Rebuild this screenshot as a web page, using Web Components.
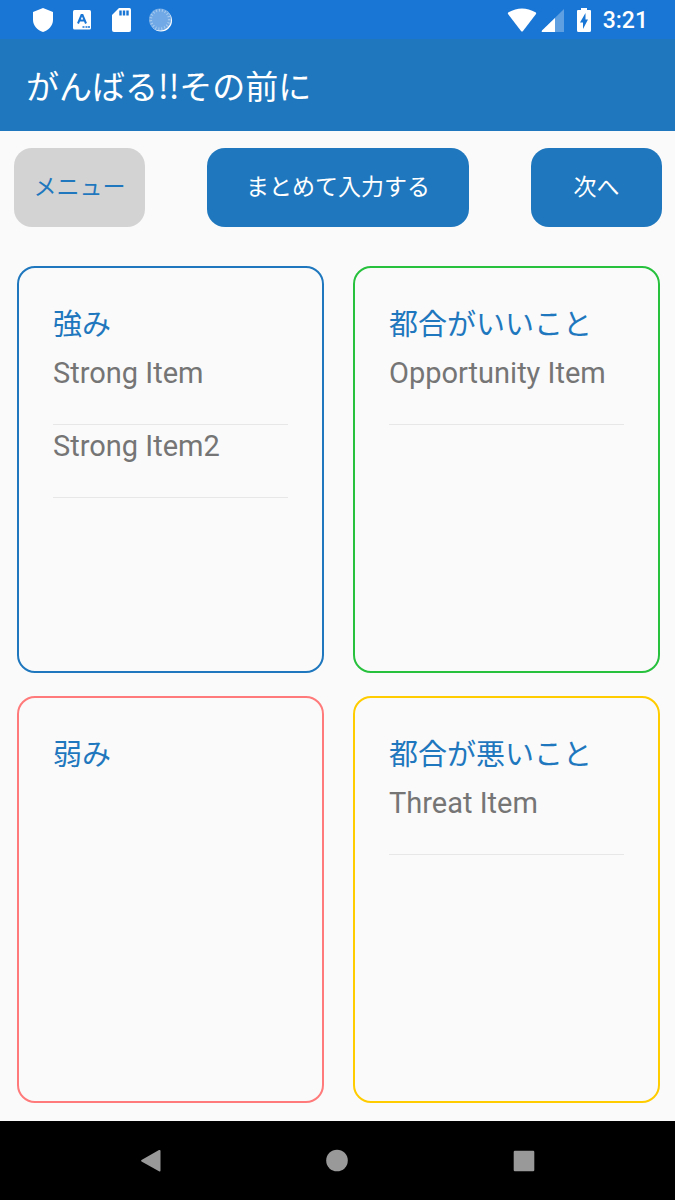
<!DOCTYPE html>
<html lang="ja">
<head>
    <meta charset="utf-8">
    <meta name="viewport" content="width=device-width, initial-scale=1">
    <title>がんばる!!その前に</title>
    <style>
        body {
            margin: 0;
            background-color: #fafafa;
            font-family: Roboto, "Noto Sans CJK JP", sans-serif;
        }
    </style>
</head>
<body>
    <swot-app></swot-app>

    <script>
        class StatusBar extends HTMLElement {
            constructor() {
                super();
                this.attachShadow({ mode: 'open' });
                this.shadowRoot.innerHTML = `
                    <style>
                        :host {
                            display: flex;
                            align-items: center;
                            justify-content: space-between;
                            height: 39px;
                            padding: 0 27px 0 31px;
                            background-color: #1976d5;
                            color: white;
                            font-size: 23px;
                            font-weight: 500;
                        }
                        div {
                            display: flex;
                            align-items: center;
                        }
                        .notifications { gap: 15px; }
                        .system { gap: 4px; }
                        svg { display: block; }
                        time {
                            margin-left: 4px;
                            padding-top: 2px;
                            line-height: 36px;
                        }
                    </style>
                    <div class="notifications">
                        <svg width="24" height="24" viewBox="0 0 24 24" fill="white" aria-hidden="true">
                            <path d="M12 0 L22 4 V12 C22 17.500 17.500 22.500 12 24 C6.500 22.500 2 17.500 2 12 V4 Z"/>
                        </svg>
                        <svg width="24" height="24" viewBox="0 0 24 24" aria-hidden="true">
                            <rect x="3" y="2" width="18" height="19.500" rx="1.500" fill="white"/>
                            <path d="M8 15.500 L11.500 7 L12.500 7 L16 15.500 M9.500 12.500 H14.500" fill="none" stroke="#1976d5" stroke-width="2"/>
                            <path d="M12.500 19 h2 M15.500 19 h2 M18 19 h2" stroke="#1976d5" stroke-width="1.500"/>
                        </svg>
                        <svg width="24" height="24" viewBox="0 0 24 24" aria-hidden="true">
                            <path d="M10 0 H20.500 Q22 0 22 1.500 V22 Q22 24 20 24 H5 Q3 24 3 22 V7 Z" fill="white"/>
                            <path d="M11.500 2.500 V7.500 M15 2.500 V7.500 M18.500 2.500 V7.500" stroke="#1976d5" stroke-width="2.400"/>
                        </svg>
                        <svg width="24" height="24" viewBox="0 0 24 24" aria-hidden="true">
                            <circle cx="13" cy="12.500" r="11" fill="white"/>
                            <circle cx="12" cy="11.500" r="11" fill="#70a9e5"/>
                            <circle cx="12" cy="11.500" r="9.200" fill="none" stroke="#a9cbef" stroke-width="2.600" stroke-dasharray="1 2"/>
                        </svg>
                    </div>
                    <div class="system">
                        <svg width="30" height="24" viewBox="0 0 30 24" fill="white" aria-hidden="true">
                            <path d="M1 6 Q0.500 5 1.500 4.300 Q15 -3.500 28.500 4.300 Q29.500 5 29 6 L16 23 Q15 24 14 23 Z"/>
                        </svg>
                        <svg width="24" height="24" viewBox="0 0 24 24" fill="white" aria-hidden="true">
                            <path d="M23 1 V24 H2 Q0 24 1 22.500 Z" opacity="0.3"/>
                            <path d="M14 10 V24 H2 Q0 24 1 22.500 Z"/>
                        </svg>
                        <svg width="26" height="24" viewBox="2 0 26 24" aria-hidden="true">
                            <path d="M14 0 H20 V2 H23 Q24 2 24 3 V22.500 Q24 24 22.500 24 H11.500 Q10 24 10 22.500 V3 Q10 2 11 2 H14 Z" fill="white"/>
                            <path d="M18.500 5 L13 14.500 H16 V21 L21 11.500 H18.500 Z" fill="#1976d5"/>
                        </svg>
                        <time>3:21</time>
                    </div>
                `;
            }
        }

        class AppHeader extends HTMLElement {
            constructor() {
                super();
                this.attachShadow({ mode: 'open' });
                this.shadowRoot.innerHTML = `
                    <style>
                        :host {
                            display: block;
                            padding: 21px 26px;
                            background-color: #1f78be;
                            color: white;
                        }
                        h1 {
                            margin: 0;
                            font-family: "Noto Sans CJK JP", sans-serif;
                            font-size: 33px;
                            font-weight: 400;
                            line-height: 50px;
                        }
                    </style>
                    <h1><slot></slot></h1>
                `;
            }
        }

        class ActionButton extends HTMLElement {
            constructor() {
                super();
                this.attachShadow({ mode: 'open' });
                this.shadowRoot.innerHTML = `
                    <style>
                        :host { display: block; }
                        button {
                            display: block;
                            width: 100%;
                            height: 79px;
                            padding: 0;
                            border: 0;
                            border-radius: 18px;
                            background-color: #1f78be;
                            color: white;
                            font: inherit;
                            font-size: 23px;
                            line-height: 32px;
                            white-space: nowrap;
                            cursor: pointer;
                        }
                        :host([secondary]) button {
                            background-color: #d3d3d3;
                            color: #1f78be;
                        }
                    </style>
                    <button type="button"><slot></slot></button>
                `;
            }
        }

        // color = border color of the card
        class SwotCard extends HTMLElement {
            constructor() {
                super();
                this.attachShadow({ mode: 'open' });
                this.shadowRoot.innerHTML = `
                    <style>
                        :host {
                            display: block;
                            padding: 34px;
                            border: 2px solid #1f78be;
                            border-radius: 18px;
                        }
                        :host([color="green"]) { border-color: #28c13e; }
                        :host([color="red"]) { border-color: #ff7b7b; }
                        :host([color="yellow"]) { border-color: #ffcc00; }
                        h2 {
                            margin: 0 0 10px;
                            color: #1f78be;
                            font-family: "Noto Sans CJK JP", sans-serif;
                            font-size: 29px;
                            font-weight: 400;
                            line-height: 40px;
                        }
                    </style>
                    <h2></h2>
                    <div role="list"><slot></slot></div>
                `;
            }

            connectedCallback() {
                this.shadowRoot.querySelector('h2').textContent = this.getAttribute('heading');
            }
        }

        class SwotItem extends HTMLElement {
            constructor() {
                super();
                this.attachShadow({ mode: 'open' });
                this.shadowRoot.innerHTML = `
                    <style>
                        :host {
                            display: block;
                            padding-bottom: 30px;
                            border-bottom: 1px solid #e7e7e7;
                            color: #757575;
                            font-size: 29px;
                            line-height: 42px;
                        }
                    </style>
                    <slot></slot>
                `;
            }

            connectedCallback() {
                this.setAttribute('role', 'listitem');
            }
        }

        class NavigationBar extends HTMLElement {
            constructor() {
                super();
                this.attachShadow({ mode: 'open' });
                this.shadowRoot.innerHTML = `
                    <style>
                        :host {
                            display: block;
                            background-color: black;
                        }
                        nav {
                            display: grid;
                            grid-template-columns: repeat(3, 1fr);
                            height: 79px;
                            padding: 0 58px;
                        }
                        button {
                            display: flex;
                            align-items: center;
                            justify-content: center;
                            padding: 0;
                            border: 0;
                            background: none;
                            color: #999;
                        }
                    </style>
                    <nav>
                        <button type="button" aria-label="戻る">
                            <svg width="24" height="24" viewBox="0 0 24 24" fill="currentColor">
                                <path d="M20 1 Q21.500 0.500 21.500 2 V21.500 Q21.500 23 20 22.300 L2.500 12.500 Q1.500 11.700 2.500 11 Z"/>
                            </svg>
                        </button>
                        <button type="button" aria-label="ホーム">
                            <svg width="24" height="24" viewBox="0 0 24 24" fill="currentColor">
                                <circle cx="12" cy="11.500" r="10.800"/>
                            </svg>
                        </button>
                        <button type="button" aria-label="履歴">
                            <svg width="24" height="24" viewBox="0 0 24 24" fill="currentColor">
                                <rect x="1.700" y="1.700" width="20.600" height="20.600" rx="1.200"/>
                            </svg>
                        </button>
                    </nav>
                `;
            }
        }

        class SwotApp extends HTMLElement {
            constructor() {
                super();
                this.attachShadow({ mode: 'open' });
                this.shadowRoot.innerHTML = `
                    <style>
                        :host {
                            display: flex;
                            flex-direction: column;
                            min-height: 100vh;
                        }
                        main {
                            flex: 1;
                            display: flex;
                            flex-direction: column;
                            gap: 39px;
                            padding: 17px 0 18px;
                        }
                        .actions {
                            display: grid;
                            grid-template-columns: 1fr 2fr 1fr;
                            gap: 62px;
                            padding: 0 13px 0 14px;
                        }
                        .cards {
                            flex: 1;
                            display: grid;
                            grid-template-columns: 1fr 1fr;
                            grid-auto-rows: 1fr;
                            gap: 23px 29px;
                            padding: 0 15px 0 17px;
                        }
                    </style>
                    <status-bar></status-bar>
                    <app-header>がんばる!!その前に</app-header>
                    <main>
                        <div class="actions">
                            <action-button secondary>メニュー</action-button>
                            <action-button>まとめて入力する</action-button>
                            <action-button>次へ</action-button>
                        </div>
                        <div class="cards">
                            <swot-card heading="強み" color="blue">
                                <swot-item>Strong Item</swot-item>
                                <swot-item>Strong Item2</swot-item>
                            </swot-card>
                            <swot-card heading="都合がいいこと" color="green">
                                <swot-item>Opportunity Item</swot-item>
                            </swot-card>
                            <swot-card heading="弱み" color="red"></swot-card>
                            <swot-card heading="都合が悪いこと" color="yellow">
                                <swot-item>Threat Item</swot-item>
                            </swot-card>
                        </div>
                    </main>
                    <navigation-bar></navigation-bar>
                `;
            }
        }

        customElements.define('status-bar', StatusBar);
        customElements.define('app-header', AppHeader);
        customElements.define('action-button', ActionButton);
        customElements.define('swot-card', SwotCard);
        customElements.define('swot-item', SwotItem);
        customElements.define('navigation-bar', NavigationBar);
        customElements.define('swot-app', SwotApp);
    </script>
</body>
</html>
